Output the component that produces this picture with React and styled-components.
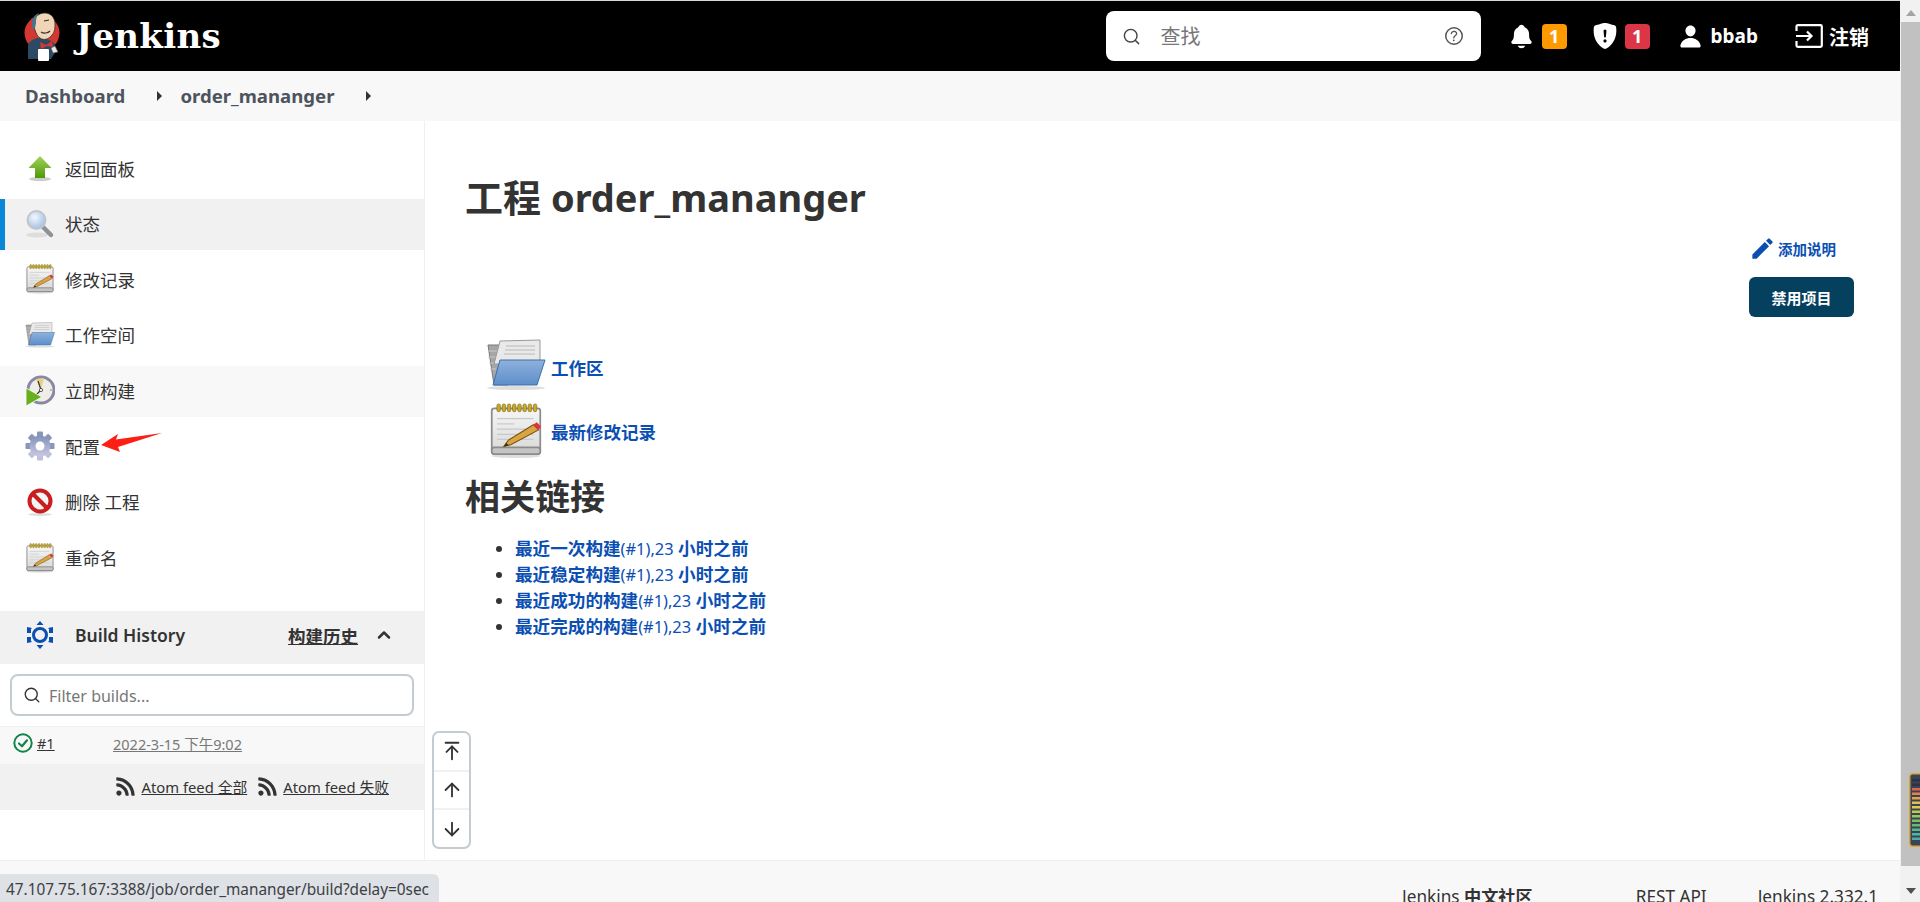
import React from "react";
import styled, { createGlobalStyle } from "styled-components";
import { ArrowDown, ArrowUp, ArrowUpToLine, ChevronUp, Search } from "lucide-react";
import { BsShieldFillExclamation } from "react-icons/bs";
import { FaRss } from "react-icons/fa";
import { IoHelpCircleOutline, IoNotifications, IoPerson } from "react-icons/io5";
import { MdEdit } from "react-icons/md";

const FONT = `"Noto Sans", "Noto Sans CJK SC", sans-serif`;

const GlobalStyle = createGlobalStyle`
  html, body {
    margin: 0;
    height: 902px;
    overflow: hidden;
    background: #fff;
    font-family: ${FONT};
    color: #333;
  }
  * { box-sizing: border-box; }
`;

const Shell = styled.div`
  display: flex;
  width: 1920px;
  height: 902px;
  overflow: hidden;
  position: relative;
`;

const Page = styled.div`
  width: 1900px;
  height: 902px;
  display: flex;
  flex-direction: column;
  flex: none;
`;

/* ---------- header ---------- */

const Header = styled.header`
  height: 71px;
  flex: none;
  background: #000;
  border-top: 1px solid #d8d8d8;
  display: flex;
  align-items: center;
  padding: 0 31px 0 24px;
  color: #fff;
`;

const Brand = styled.div`
  display: flex;
  align-items: center;
  gap: 16px;
  margin-right: auto;
`;

const BrandName = styled.span`
  font-family: "DejaVu Serif", "Liberation Serif", serif;
  font-weight: 700;
  font-size: 34px;
  letter-spacing: 0.3px;
`;

const SearchBox = styled.div`
  width: 375px;
  height: 50px;
  background: #fff;
  border-radius: 8px;
  display: flex;
  align-items: center;
  padding: 0 15px 0 16px;
  color: #444;
`;

const SearchInput = styled.input`
  flex: 1;
  min-width: 0;
  border: 0;
  outline: 0;
  margin-left: 18px;
  font: 400 20px ${FONT};
  &::placeholder { color: #777; }
`;

const HeaderItem = styled.div`
  display: flex;
  align-items: center;
  gap: ${(p) => p.$gap || 6}px;
  margin-left: ${(p) => p.$left}px;
  font-weight: 700;
  font-size: ${(p) => p.$size || 19}px;
`;

const CountBadge = styled.span`
  width: 25px;
  height: 25px;
  border-radius: 4px;
  background: ${(p) => p.$color};
  color: #fff;
  font-size: 18px;
  font-weight: 700;
  display: flex;
  align-items: center;
  justify-content: center;
`;

/* ---------- breadcrumb ---------- */

const Breadcrumbs = styled.nav`
  height: 50px;
  flex: none;
  background: #f8f8f8;
  display: flex;
  align-items: center;
  padding-left: 25px;
  color: #4d545d;
  font-size: 18.6px;
  font-weight: 700;
`;

const Crumb = styled.span`
  line-height: 24px;
`;

const CrumbCaret = styled.i`
  width: 0;
  height: 0;
  margin: 0 18px 0 32px;
  border-left: 5px solid #333;
  border-top: 5px solid transparent;
  border-bottom: 5px solid transparent;
`;

/* ---------- sidebar ---------- */

const Body = styled.div`
  flex: 1;
  min-height: 0;
  display: flex;
`;

const Sidebar = styled.aside`
  width: 425px;
  flex: none;
  border-right: 1px solid #f0f0f0;
  padding-top: 22px;
`;

const TaskList = styled.div`
  display: flex;
  flex-direction: column;
  gap: 4.67px;
  margin-bottom: 27px;
`;

const Task = styled.div`
  position: relative;
  height: 51px;
  display: flex;
  align-items: center;
  padding: 0 0 1px 25px;
  gap: 10px;
  font-size: 17.5px;
  color: #333;
  background: ${(p) => (p.$active ? "#f1f1f1" : p.$hover ? "#f8f8f8" : "transparent")};
  box-shadow: ${(p) => (p.$active ? "inset 5px 0 0 #0b87d8" : "none")};
`;

const TaskIcon = styled.span`
  width: 30px;
  height: 32px;
  flex: none;
  display: flex;
  align-items: center;
  justify-content: center;
`;

const RedArrow = styled.svg`
  position: absolute;
  left: 100px;
  top: 12px;
`;

const PanelHead = styled.div`
  height: 53px;
  background: #f1f1f1;
  display: flex;
  align-items: center;
  padding: 0 30px 4px 26px;
  font-size: 17.5px;
  font-weight: 600;
  color: #333;
`;

const PanelTitle = styled.span`
  margin-left: 21px;
  margin-right: auto;
`;

const PanelLink = styled.span`
  text-decoration: underline;
  margin-right: 16px;
  font-weight: 700;
`;

const FilterWrap = styled.div`
  padding: 10px 10px;
`;

const FilterBox = styled.div`
  height: 42px;
  border: 2px solid #c3ccd1;
  border-radius: 8px;
  display: flex;
  align-items: center;
  gap: 6px;
  padding-left: 11px;
  color: #333;
`;

const FilterInput = styled.input`
  flex: 1;
  min-width: 0;
  border: 0;
  outline: 0;
  padding: 3px 2px 0;
  background: transparent;
  font: 400 16px ${FONT};
  &::placeholder { color: #777; }
`;

const BuildRow = styled.div`
  height: 38px;
  background: #f8f8f8;
  border-top: 1px solid #f0f0f0;
  display: flex;
  align-items: flex-start;
  padding: 6px 0 0 13px;
  font-size: 14.5px;
`;

const BuildNumber = styled.span`
  margin-left: 4px;
  width: 76px;
  text-decoration: underline;
`;

const BuildDate = styled.span`
  color: #777;
  text-decoration: underline;
`;

const FeedRow = styled.div`
  height: 46px;
  background: #f1f1f1;
  display: flex;
  align-items: center;
  justify-content: flex-end;
  gap: 10px;
  padding-right: 35px;
  font-size: 14.8px;
  color: #333;
`;

const FeedLink = styled.span`
  display: flex;
  align-items: center;
  gap: 5px;
  span { text-decoration: underline; }
`;

/* ---------- main ---------- */

const Main = styled.main`
  flex: 1;
  min-width: 0;
  padding: 53px 46px 0 40px;
`;

const Title = styled.h1`
  margin: 0;
  font-size: 38px;
  line-height: 46px;
  font-weight: 700;
  color: #333;
`;

const Actions = styled.div`
  margin-top: 17px;
  display: flex;
  flex-direction: column;
  align-items: flex-end;
`;

const AddDescription = styled.a`
  display: flex;
  align-items: center;
  gap: 2px;
  height: 22px;
  margin-right: 18px;
  font-size: 14.5px;
  font-weight: 700;
  color: #0b4fb3;
`;

const DisableButton = styled.button`
  width: 105px;
  height: 40px;
  margin-top: 18px;
  border: 0;
  border-radius: 6px;
  background: #05405f;
  color: #fff;
  font: 700 15px ${FONT};
`;

const LinkRow = styled.div`
  display: flex;
  align-items: center;
  gap: 5px;
  margin-left: 21px;
  margin-top: ${(p) => p.$top}px;
  height: ${(p) => p.$height}px;
  font-size: 17.5px;
  font-weight: 700;
  color: #0b4fb3;
`;

const LinkIcon = styled.span`
  width: 60px;
  flex: none;
  display: flex;
  justify-content: center;
`;

const LinkLabel = styled.span`
  margin-top: ${(p) => p.$shift || 0}px;
`;

const SubTitle = styled.h2`
  margin: 15px 0 0;
  font-size: 35px;
  line-height: 46px;
  font-weight: 700;
  color: #333;
`;

const Links = styled.ul`
  margin: 15px 0 0;
  padding-left: 50px;
  font-size: 17.6px;
  line-height: 26px;
  font-weight: 700;
  color: #0b4fb3;
  li { height: 26px; }
  li::marker { color: #333; }
`;

const Plain = styled.span`
  font-weight: 400;
  font-size: 16.4px;
  line-height: 1;
`;

/* ---------- footer and overlays ---------- */

const Footer = styled.footer`
  height: 42px;
  flex: none;
  background: #f8f8f8;
  border-top: 1px solid #efefef;
  overflow: hidden;
  display: flex;
  justify-content: flex-end;
  padding: 24px 22px 0 0;
  font-size: 17.2px;
  line-height: 24px;
  color: #333;
`;

const FooterItem = styled.span`
  margin-left: ${(p) => p.$left}px;
  white-space: nowrap;
  b { font-weight: 700; }
`;

const ScrollTools = styled.div`
  position: absolute;
  left: 432px;
  top: 731px;
  width: 39px;
  height: 118px;
  background: #fff;
  border: 2px solid #c3ccd1;
  border-radius: 7px;
  display: flex;
  flex-direction: column;
  color: #333;
`;

const ScrollTool = styled.span`
  flex: 1;
  display: flex;
  align-items: center;
  justify-content: center;
  & + & { border-top: 2px solid #f1f1f1; }
`;

const StatusBubble = styled.div`
  position: absolute;
  left: 0;
  bottom: 0;
  width: 439px;
  height: 28px;
  padding-left: 6px;
  background: #dee1e6;
  border-top-right-radius: 6px;
  font-size: 15.35px;
  line-height: 30px;
  color: #3c4043;
  white-space: nowrap;
`;

const Scrollbar = styled.div`
  width: 20px;
  flex: none;
  background: #f1f1f1;
  display: flex;
  flex-direction: column;
  align-items: center;
  padding-left: 1px;
`;

const ScrollArrow = styled.i`
  width: 0;
  height: 0;
  border-left: 5px solid transparent;
  border-right: 5px solid transparent;
  ${(p) => (p.$down ? "border-top: 6px solid #505050;" : "border-bottom: 6px solid #a3a3a3;")}
  margin: ${(p) => (p.$down ? "22px 0 0" : "10px 0 6px")};
`;

const ScrollThumb = styled.div`
  width: 100%;
  height: 844px;
  flex: none;
  background: #c1c1c1;
`;

const Meter = styled.svg`
  position: absolute;
  left: 1909px;
  top: 773px;
`;

/* ---------- drawings ---------- */

function JenkinsLogo() {
  return (
    <svg width="36" height="49" viewBox="0 0 36 49">
      <circle cx="18" cy="21" r="17.5" fill="#d33833" />
      <path d="M4 47V33c1-4 6-6 9-7l9 1c4 1 8 3 9 6l1 6-5 8z" fill="#2c4a63" />
      <path d="M10 15C8 6 14 1 21 1c6 0 10 5 10 11 0 3 0 8-3 11-3 4-8 6-12 3-3-2-4-5-6-11z" fill="#f0d6b7" stroke="#3a2f2b" strokeWidth=".8" />
      <path d="M9 18C6 10 9 3 15 1c-3 4-3 7-3 10l-1 5z" fill="#49728b" />
      <path d="M20 9l5-1M17 20c3 2 7 1 9-1" stroke="#3a2f2b" strokeWidth="1.2" fill="none" />
      <path d="M16 30l6 3 6-4 1 6-6-1-6 3z" fill="#d33833" />
      <rect x="14" y="37" width="11" height="12" rx="1" fill="#fff" />
      <path d="M27 36l4-2 3 6-5 1z" fill="#e8e8e8" stroke="#555" strokeWidth=".6" />
    </svg>
  );
}

function UpIcon() {
  return (
    <svg width="26" height="26" viewBox="0 0 26 26">
      <defs>
        <linearGradient id="gUp" x1="0" y1="0" x2="0" y2="1">
          <stop offset="0" stopColor="#a3d35e" />
          <stop offset="1" stopColor="#4e9a06" />
        </linearGradient>
      </defs>
      <ellipse cx="13" cy="24" rx="11" ry="2" fill="#ccc" />
      <path d="M13 1l11.500 12H18v10H8V13H1.500z" fill="url(#gUp)" />
    </svg>
  );
}

function LensIcon() {
  return (
    <svg width="30" height="30" viewBox="0 0 30 30">
      <defs>
        <radialGradient id="gLens" cx=".4" cy=".35" r=".8">
          <stop offset="0" stopColor="#f4f8fd" />
          <stop offset="1" stopColor="#8fb4e0" />
        </radialGradient>
      </defs>
      <ellipse cx="12" cy="26" rx="11" ry="2.500" fill="#ddd" />
      <path d="M18 18l8 8" stroke="#8d9296" strokeWidth="4.500" strokeLinecap="round" />
      <circle cx="11.500" cy="11" r="9" fill="url(#gLens)" stroke="#c2c6ca" strokeWidth="2" />
    </svg>
  );
}

function NotepadIcon({ size = 28 }) {
  return (
    <svg width={size} height={size * 1.07} viewBox="0 0 30 32">
      <defs>
        <linearGradient id="gPad" x1="0" y1="0" x2="0" y2="1">
          <stop offset="0" stopColor="#f6f6f6" />
          <stop offset="1" stopColor="#d8d8d8" />
        </linearGradient>
      </defs>
      <ellipse cx="15" cy="30.500" rx="14" ry="1.200" fill="#ddd" />
      <rect x="1" y="3" width="28" height="26.500" rx="1.500" fill="url(#gPad)" stroke="#8b8b8b" />
      <rect x="1" y="25.500" width="28" height="4" rx="1.500" fill="#c4c4c4" stroke="#8b8b8b" />
      {[4, 7, 10, 13, 16, 19, 22, 25].map((x) => (
        <rect key={x} x={x} y="0.500" width="2" height="4.500" rx="1" fill="#c7a92c" stroke="#85701a" strokeWidth=".4" />
      ))}
      {[9, 12, 15, 18, 21].map((y, i) => (
        <path key={y} d={`M4 ${y}h${i === 1 ? 10 : 21}`} stroke="#c9c9c9" strokeWidth=".7" />
      ))}
      <path d="M8 25l2.500-3.500L25 12.500l3 3L12 24z" fill="#d9a441" stroke="#7a5312" strokeWidth=".6" />
      <path d="M25 12.500l2-1.400 2.400 2.400-1.400 2z" fill="#e0303a" />
      <path d="M8 25l1.400-2 1.400 1.400z" fill="#3a2a10" />
    </svg>
  );
}

function FolderIcon({ size = 30 }) {
  return (
    <svg width={size} height={size * 0.85} viewBox="0 0 60 51">
      <defs>
        <linearGradient id="gFolder" x1="0" y1="0" x2="0" y2="1">
          <stop offset="0" stopColor="#8db2dd" />
          <stop offset="1" stopColor="#5d8ec9" />
        </linearGradient>
      </defs>
      <ellipse cx="30" cy="49" rx="29" ry="2" fill="#ddd" />
      <path d="M2 6h20v40H8z" fill="#a6a6a6" stroke="#777" />
      <path d="M2 12h10M2 18h9M3 24h8M4 30h6" stroke="#c9c9c9" />
      <path d="M14 2L54 1v24H8z" fill="#e9e9e9" stroke="#999" />
      <path d="M20 7h29M19 11h30M18 15h31" stroke="#b9b9b9" />
      <path d="M14 21h45l-8 25H7z" fill="url(#gFolder)" stroke="#3f6ea6" />
    </svg>
  );
}

function ClockIcon() {
  return (
    <svg width="30" height="32" viewBox="0 0 30 32">
      <circle cx="16" cy="15" r="13" fill="#efeee6" stroke="#8a86a6" strokeWidth="3" />
      <path d="M16 15L11 4l8-1z" fill="#e6cf87" />
      <path d="M16 15l-3-9M16 15l-6 6" stroke="#333" strokeWidth="1.200" />
      <circle cx="16" cy="15" r="1.600" fill="#fff" stroke="#333" strokeWidth=".8" />
      <circle cx="26" cy="15" r="1" fill="#aaa" />
      <path d="M1 13l16 9L1 31z" fill="#69b01f" stroke="#fff" strokeWidth=".8" />
    </svg>
  );
}

function GearIcon() {
  return (
    <svg width="30" height="30" viewBox="0 0 30 30">
      <defs>
        <linearGradient id="gGear" x1="0" y1="0" x2="0" y2="1">
          <stop offset="0" stopColor="#8290b8" />
          <stop offset="1" stopColor="#c9cae2" />
        </linearGradient>
      </defs>
      <g fill="url(#gGear)">
        {[0, 45, 90, 135, 180, 225, 270, 315].map((a) => (
          <rect key={a} x="12" y="0.500" width="6" height="7" rx="1" fill={a > 90 && a < 270 ? "#bfc1de" : "#8896bb"} transform={`rotate(${a} 15 15)`} />
        ))}
        <circle cx="15" cy="15" r="10.500" />
      </g>
      <circle cx="15" cy="15" r="4.500" fill="#fff" />
    </svg>
  );
}

function NoIcon() {
  return (
    <svg width="28" height="28" viewBox="0 0 28 28">
      <ellipse cx="14" cy="26.500" rx="12" ry="1.500" fill="#ddd" />
      <circle cx="14" cy="13" r="10.500" fill="#f4f4f4" stroke="#c81e1e" strokeWidth="4" />
      <path d="M6.500 5.500l15 15" stroke="#c81e1e" strokeWidth="4" />
    </svg>
  );
}

function HistoryIcon() {
  return (
    <svg width="28" height="30" viewBox="0 0 28 30" fill="#0b4fb3">
      <circle cx="14" cy="15" r="6.500" fill="none" stroke="#0b4fb3" strokeWidth="3" />
      <path d="M14 1l3.500 4h-7zM14 29l-3.500-4h7z" />
      <path d="M1 7l5 1-1 1v4H1zM27 7l-5 1 1 1v4h4zM1 23l5-1-1-1v-4H1zM27 23l-5-1 1-1v-4h4z" />
    </svg>
  );
}

function StatusOk() {
  return (
    <svg width="20" height="20" viewBox="0 0 20 20" fill="none" stroke="#138347">
      <circle cx="10" cy="10" r="8.700" strokeWidth="2" />
      <path d="M6 10.500l3 2.800 5-6" strokeWidth="2.200" strokeLinecap="round" strokeLinejoin="round" />
    </svg>
  );
}

function LogoutIcon() {
  return (
    <svg width="28" height="24" viewBox="0 0 28 24" fill="none" stroke="#fff" strokeWidth="2.200">
      <path d="M1.500 7V2.500a1.300 1.300 0 0 1 1.300-1.300H25.500a1.300 1.300 0 0 1 1.300 1.300v19a1.300 1.300 0 0 1-1.300 1.300H2.800a1.300 1.300 0 0 1-1.300-1.300V17" />
      <path d="M1 12h15M12 7.500l4.500 4.500-4.500 4.500" />
    </svg>
  );
}

function MeterDrawing() {
  const colors = ["#2c3344", "#2c3344", "#e0644c", "#e0844c", "#e0a44c", "#e0c04c", "#d8cc4c", "#b8cc50", "#98c858", "#78c060", "#68b870", "#58b888", "#48b8a0", "#40b0a8"];
  return (
    <Meter width="11" height="74" viewBox="0 0 11 74">
      <rect x="0.700" y="0.700" width="14" height="72.500" rx="3" fill="#3b4256" stroke="#d9a63a" strokeWidth="1.500" />
      {colors.map((c, i) => (
        <rect key={i} x="3" y={6 + i * 4.500} width="8" height="2.500" fill={c} />
      ))}
    </Meter>
  );
}

const tasks = [
  { label: "返回面板", icon: <UpIcon /> },
  { label: "状态", icon: <LensIcon />, active: true },
  { label: "修改记录", icon: <NotepadIcon /> },
  { label: "工作空间", icon: <FolderIcon /> },
  { label: "立即构建", icon: <ClockIcon />, hover: true },
  { label: "配置", icon: <GearIcon />, arrow: true },
  { label: "删除 工程", icon: <NoIcon /> },
  { label: "重命名", icon: <NotepadIcon /> },
];

const related = ["最近一次构建", "最近稳定构建", "最近成功的构建", "最近完成的构建"];

export default function App() {
  return (
    <Shell>
      <GlobalStyle />
      <Page>
        <Header>
          <Brand>
            <JenkinsLogo />
            <BrandName>Jenkins</BrandName>
          </Brand>
          <SearchBox>
            <Search size={19} strokeWidth={1.8} />
            <SearchInput placeholder="查找" />
            <IoHelpCircleOutline size={24} color="#555" />
          </SearchBox>
          <HeaderItem $left={27} $gap={7}>
            <IoNotifications size={27} />
            <CountBadge $color="#fe9a00">1</CountBadge>
          </HeaderItem>
          <HeaderItem $left={25} $gap={7}>
            <BsShieldFillExclamation size={26} />
            <CountBadge $color="#dc3545">1</CountBadge>
          </HeaderItem>
          <HeaderItem $left={28} $gap={8}>
            <IoPerson size={25} />
            <span>bbab</span>
          </HeaderItem>
          <HeaderItem $left={37} $size={20}>
            <LogoutIcon />
            <span>注销</span>
          </HeaderItem>
        </Header>

        <Breadcrumbs>
          <Crumb>Dashboard</Crumb>
          <CrumbCaret />
          <Crumb>order_mananger</Crumb>
          <CrumbCaret />
        </Breadcrumbs>

        <Body>
          <Sidebar>
            <TaskList>
              {tasks.map((t) => (
                <Task key={t.label} $active={t.active} $hover={t.hover}>
                  <TaskIcon>{t.icon}</TaskIcon>
                  {t.label}
                  {t.arrow && (
                    <RedArrow width="64" height="20" viewBox="0 0 64 20">
                      <path d="M1 12L18 1l-2 5.500L62 0 18 14l2 5z" fill="#fb1f14" />
                    </RedArrow>
                  )}
                </Task>
              ))}
            </TaskList>

            <PanelHead>
              <HistoryIcon />
              <PanelTitle>Build History</PanelTitle>
              <PanelLink>构建历史</PanelLink>
              <ChevronUp size={20} strokeWidth={3} />
            </PanelHead>
            <FilterWrap>
              <FilterBox>
                <Search size={18} strokeWidth={1.8} />
                <FilterInput placeholder="Filter builds..." />
              </FilterBox>
            </FilterWrap>
            <BuildRow>
              <StatusOk />
              <BuildNumber>#1</BuildNumber>
              <BuildDate>2022-3-15 下午9:02</BuildDate>
            </BuildRow>
            <FeedRow>
              <FeedLink>
                <FaRss size={21} />
                <span>Atom feed 全部</span>
              </FeedLink>
              <FeedLink>
                <FaRss size={21} />
                <span>Atom feed 失败</span>
              </FeedLink>
            </FeedRow>
          </Sidebar>

          <Main>
            <Title>工程 order_mananger</Title>
            <Actions>
              <AddDescription>
                <MdEdit size={27} />
                添加说明
              </AddDescription>
              <DisableButton>禁用项目</DisableButton>
            </Actions>
            <LinkRow $top={22} $height={51}>
              <LinkIcon>
                <FolderIcon size={60} />
              </LinkIcon>
              <LinkLabel $shift={5}>工作区</LinkLabel>
            </LinkRow>
            <LinkRow $top={13} $height={56}>
              <LinkIcon>
                <NotepadIcon size={52} />
              </LinkIcon>
              <LinkLabel>最新修改记录</LinkLabel>
            </LinkRow>
            <SubTitle>相关链接</SubTitle>
            <Links>
              {related.map((name) => (
                <li key={name}>
                  {name}
                  <Plain>(#1),23</Plain> 小时之前
                </li>
              ))}
            </Links>
          </Main>
        </Body>

        <Footer>
          <FooterItem $left={0}>
            Jenkins <b>中文社区</b>
          </FooterItem>
          <FooterItem $left={103}>REST API</FooterItem>
          <FooterItem $left={51}>Jenkins 2.332.1</FooterItem>
        </Footer>
      </Page>

      <Scrollbar>
        <ScrollArrow />
        <ScrollThumb />
        <ScrollArrow $down />
      </Scrollbar>
      <MeterDrawing />

      <ScrollTools>
        <ScrollTool>
          <ArrowUpToLine size={22} />
        </ScrollTool>
        <ScrollTool>
          <ArrowUp size={22} />
        </ScrollTool>
        <ScrollTool>
          <ArrowDown size={22} />
        </ScrollTool>
      </ScrollTools>
      <StatusBubble>47.107.75.167:3388/job/order_mananger/build?delay=0sec</StatusBubble>
    </Shell>
  );
}
